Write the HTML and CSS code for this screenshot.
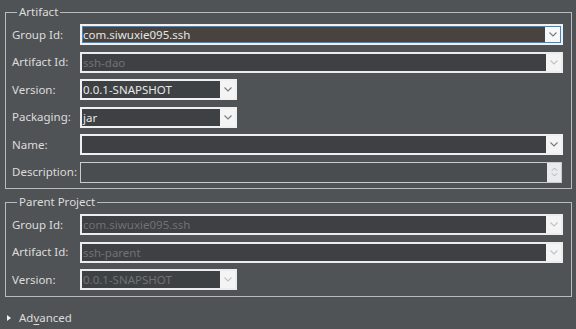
FILE: index.html
```html
<!DOCTYPE html>
<html>
<head>
<meta charset="utf-8">
<link rel="stylesheet" href="styles.css">
</head>
<body>
<div class="page">
  <fieldset class="group artifact">
    <legend>Artifact</legend>
    <div class="row">
      <label>Group Id:</label>
      <div class="combo focus"><span class="value">com.siwuxie095.ssh</span><span class="btn"><svg viewBox="0 0 8 5" class="chev"><path d="M0.5 0.5 L4 4 L7.5 0.5"/></svg></span></div>
    </div>
    <div class="row">
      <label>Artifact Id:</label>
      <div class="combo disabled"><span class="value">ssh-dao</span><span class="btn"><svg viewBox="0 0 8 5" class="chev"><path d="M0.5 0.5 L4 4 L7.5 0.5"/></svg></span></div>
    </div>
    <div class="row">
      <label>Version:</label>
      <div class="combo short"><span class="value">0.0.1-SNAPSHOT</span><span class="btn"><svg viewBox="0 0 8 5" class="chev"><path d="M0.5 0.5 L4 4 L7.5 0.5"/></svg></span></div>
    </div>
    <div class="row">
      <label>Packaging:</label>
      <div class="combo short"><span class="value">jar</span><span class="btn"><svg viewBox="0 0 8 5" class="chev"><path d="M0.5 0.5 L4 4 L7.5 0.5"/></svg></span></div>
    </div>
    <div class="row">
      <label>Name:</label>
      <div class="combo"><span class="value"></span><span class="btn"><svg viewBox="0 0 8 5" class="chev"><path d="M0.5 0.5 L4 4 L7.5 0.5"/></svg></span></div>
    </div>
    <div class="row">
      <label>Description:</label>
      <div class="combo spin"><span class="value"></span><span class="btn"><svg viewBox="0 0 8 12" class="spinchev"><path d="M1 4.5 L4 1.5 L7 4.5"/><path d="M1 7.5 L4 10.5 L7 7.5"/></svg></span></div>
    </div>
  </fieldset>

  <fieldset class="group parent">
    <legend>Parent Project</legend>
    <div class="row">
      <label>Group Id:</label>
      <div class="combo disabled"><span class="value">com.siwuxie095.ssh</span><span class="btn"><svg viewBox="0 0 8 5" class="chev"><path d="M0.5 0.5 L4 4 L7.5 0.5"/></svg></span></div>
    </div>
    <div class="row">
      <label>Artifact Id:</label>
      <div class="combo disabled"><span class="value">ssh-parent</span><span class="btn"><svg viewBox="0 0 8 5" class="chev"><path d="M0.5 0.5 L4 4 L7.5 0.5"/></svg></span></div>
    </div>
    <div class="row">
      <label>Version:</label>
      <div class="combo short disabled"><span class="value">0.0.1-SNAPSHOT</span><span class="btn"><svg viewBox="0 0 8 5" class="chev"><path d="M0.5 0.5 L4 4 L7.5 0.5"/></svg></span></div>
    </div>
  </fieldset>

  <div class="advanced">
    <span class="tri"></span>
    <span class="adv-label">Ad<u>v</u>anced</span>
  </div>
</div>
</body>
</html>
```
FILE: styles.css
```css
html, body {
  margin: 0;
  padding: 0;
  background: #505355;
}
body {
  width: 576px;
  height: 329px;
  overflow: hidden;
  font-family: "Noto Sans", "Open Sans", sans-serif;
  font-size: 11.5px;
  color: #dcdcdc;
}
.page {
  display: flex;
  flex-direction: column;
}
.group {
  margin: 4px 4px 0 5px;
  padding: 4px 8px 6px 6px;
  border: 1px solid #b9bbbc;
  display: flex;
  flex-direction: column;
  gap: 6.5px;
  min-width: 0;
}
.group legend {
  margin-left: 5px;
  padding: 0 2px;
  line-height: 16px;
  height: 16px;
  color: #dcdcdc;
}
.artifact {
  padding-bottom: 5.5px;
}
.parent {
  margin-top: 5px;
  padding-bottom: 6px;
}
.row {
  display: grid;
  grid-template-columns: 68px 1fr;
  align-items: center;
  height: 21px;
}
.row label {
  line-height: 16px;
  white-space: nowrap;
}
.combo {
  height: 21px;
  box-sizing: border-box;
  border: 2px solid #f0f0f0;
  background: #3e4143;
  display: flex;
  align-items: stretch;
}
.combo.short {
  width: 157px;
}
.combo .value {
  flex: 1;
  padding-left: 1px;
  line-height: 17px;
  color: #e6e6e6;
  white-space: nowrap;
  overflow: hidden;
}
.combo .btn {
  width: 15px;
  background: #f4f4f4;
  display: flex;
  align-items: center;
  justify-content: center;
}
.chev {
  width: 8px;
  height: 5px;
  fill: none;
  stroke: #7a7a7a;
  stroke-width: 1.1;
}
.combo.focus {
  background: #48433f;
  box-shadow: inset 0 0 0 1px #3f86c8;
}
.combo.focus .btn {
  margin: 1px 1px 1px 0;
  background: #f6f8fa;
}
.combo.disabled {
  border-color: #ececec;
}
.combo.disabled .value {
  color: #6f7274;
}
.combo.disabled .chev {
  stroke: #c2c2c2;
}
.combo.spin {
  border: 1px solid #c9cbcc;
  background: #4a4d4f;
  margin-right: 1px;
}
.combo.spin .btn {
  width: 14px;
  background: #e9eaeb;
}
.spinchev {
  width: 7px;
  height: 12px;
  fill: none;
  stroke: #a8a8a8;
  stroke-width: 1;
}
.advanced {
  margin-top: 13px;
  margin-left: 7px;
  display: flex;
  align-items: center;
  gap: 8px;
  line-height: 16px;
}
.tri {
  width: 0;
  height: 0;
  border-top: 3.5px solid transparent;
  border-bottom: 3.5px solid transparent;
  border-left: 4px solid #f0f0f0;
}
.adv-label u {
  text-decoration-thickness: 1px;
  text-underline-offset: 2px;
}
```
